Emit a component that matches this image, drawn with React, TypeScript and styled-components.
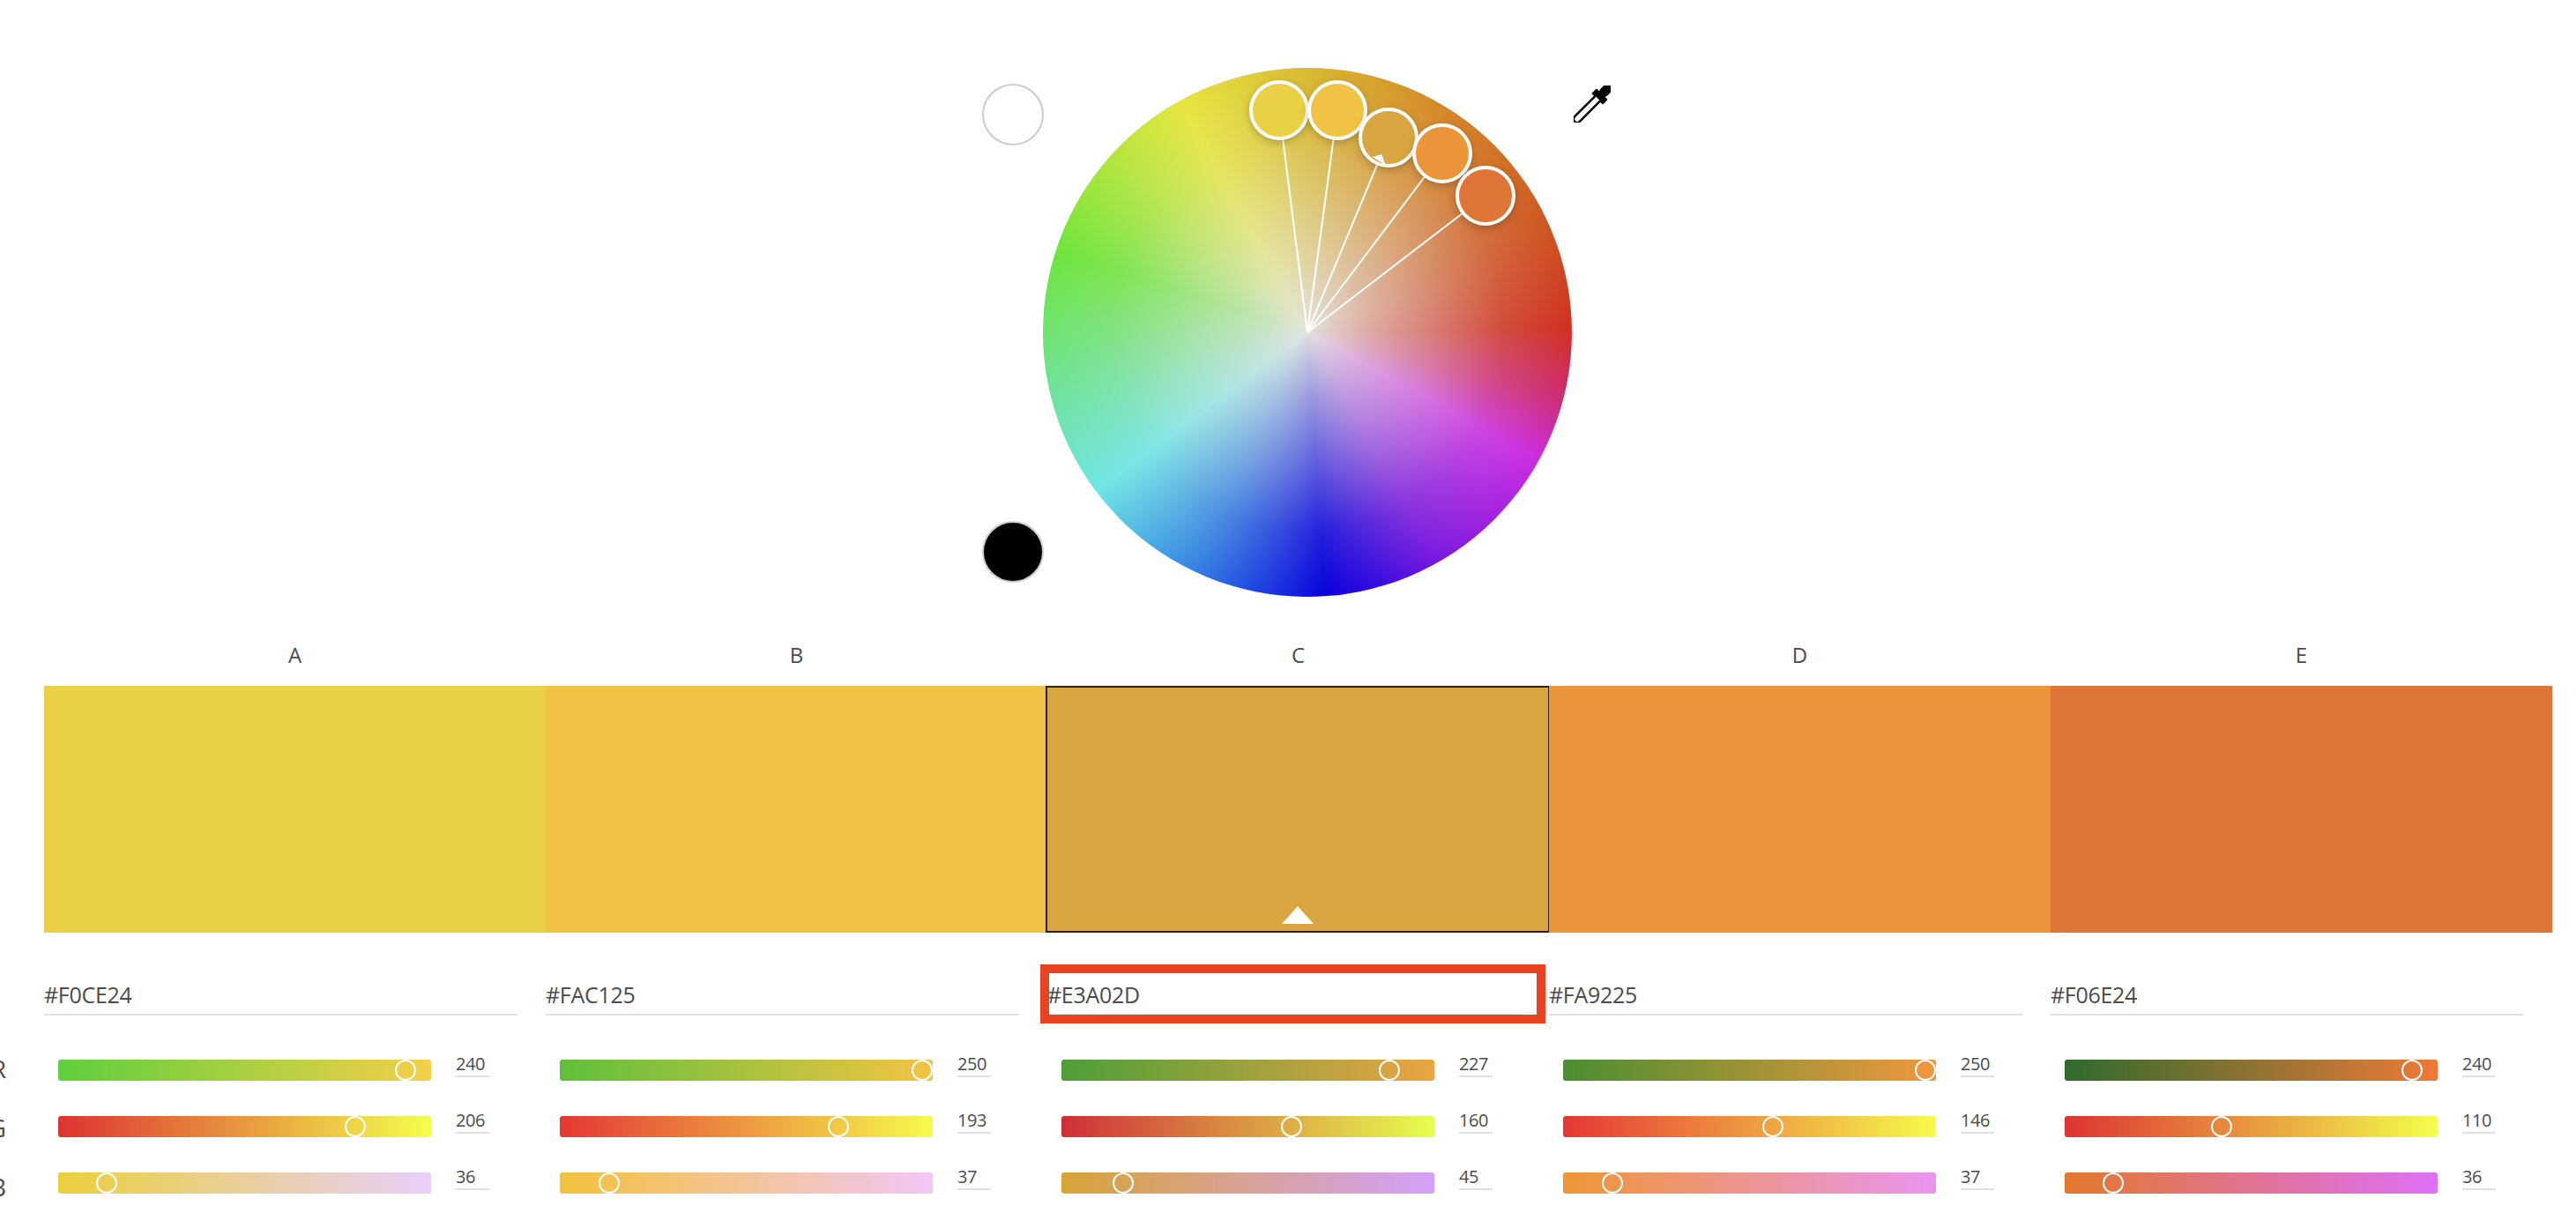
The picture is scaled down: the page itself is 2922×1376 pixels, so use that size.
import styled, { createGlobalStyle } from 'styled-components';

const GlobalStyle = createGlobalStyle`
  html, body {
    margin: 0;
    padding: 0;
    background: #ffffff;
    overflow: hidden;
  }
  body {
    font-family: "Open Sans", "Liberation Sans", sans-serif;
    color: #4b4b4b;
  }
`;

type Channel = { name: string; value: number; from: string; to: string };
type Column = { key: string; hex: string; color: string; channels: Channel[] };

const columns: Column[] = [
  {
    key: 'A',
    hex: '#F0CE24',
    color: '#e9d045',
    channels: [
      { name: 'R', value: 240, from: '#5fcf3c', to: '#f5cf49' },
      { name: 'G', value: 206, from: '#dd3331', to: '#f3ff4d' },
      { name: 'B', value: 36, from: '#ebcf3c', to: '#e8cffc' },
    ],
  },
  {
    key: 'B',
    hex: '#FAC125',
    color: '#f1c344',
    channels: [
      { name: 'R', value: 250, from: '#5fc03a', to: '#f3c443' },
      { name: 'G', value: 193, from: '#e43733', to: '#f6fb4d' },
      { name: 'B', value: 37, from: '#f2c23b', to: '#f3c6f7' },
    ],
  },
  {
    key: 'C',
    hex: '#E3A02D',
    color: '#d8a540',
    channels: [
      { name: 'R', value: 227, from: '#4d9f38', to: '#eba443' },
      { name: 'G', value: 160, from: '#cf2f38', to: '#e6ff4f' },
      { name: 'B', value: 45, from: '#d8a434', to: '#d4a0fb' },
    ],
  },
  {
    key: 'D',
    hex: '#FA9225',
    color: '#eb953a',
    channels: [
      { name: 'R', value: 250, from: '#4a8f30', to: '#f0973d' },
      { name: 'G', value: 146, from: '#e63733', to: '#f6fb4d' },
      { name: 'B', value: 37, from: '#ee9633', to: '#ea94f0' },
    ],
  },
  {
    key: 'E',
    hex: '#F06E24',
    color: '#de7536',
    channels: [
      { name: 'R', value: 240, from: '#2f6b2d', to: '#ee7a38' },
      { name: 'G', value: 110, from: '#dd3331', to: '#f3ff4d' },
      { name: 'B', value: 36, from: '#e3772c', to: '#dd70f8' },
    ],
  },
];

// handle centres inside the 600px wheel canvas
const handles = [
  { x: 268, y: 48, color: '#e9d045' },
  { x: 334, y: 48, color: '#f1c344' },
  { x: 392, y: 79, color: '#d8a540' },
  { x: 453, y: 97, color: '#eb953a' },
  { x: 502, y: 145, color: '#de7536' },
];

const Page = styled.div`
  width: 2922px;
  height: 1376px;
  padding-top: 77px;
  box-sizing: border-box;
  overflow: hidden;
`;

const Wheel = styled.div`
  position: relative;
  width: 600px;
  height: 600px;
  margin-left: 1183px;
`;

const WheelDisc = styled.div`
  width: 600px;
  height: 600px;
  border-radius: 50%;
  background:
    radial-gradient(circle closest-side, rgba(228, 228, 226, 0.98) 0%, rgba(228, 228, 226, 0.84) 10%, rgba(228, 228, 226, 0.66) 25%, rgba(228, 228, 226, 0.4) 50%, rgba(228, 228, 226, 0.14) 75%, rgba(228, 228, 226, 0) 100%),
    conic-gradient(
      #d9b92f 0deg,
      #d58a28 30deg,
      #cf5c22 62deg,
      #d03020 89deg,
      #cf2b78 105deg,
      #cb2be2 119deg,
      #7a18de 150deg,
      #0600dc 176deg,
      #3480e2 205deg,
      #6ee6e6 233deg,
      #6fe28a 262deg,
      #6ee53a 288deg,
      #b4e63c 312deg,
      #e6e63e 331deg,
      #e0cf38 346deg,
      #d9b92f 360deg
    );
`;

const Overlay = styled.svg`
  position: absolute;
  left: 0;
  top: 0;
  pointer-events: none;
`;

const Handle = styled.div<{ $color: string }>`
  position: absolute;
  width: 68px;
  height: 68px;
  margin: -34px 0 0 -34px;
  box-sizing: border-box;
  border: 4px solid #ffffff;
  border-radius: 50%;
  background: ${p => p.$color};
  box-shadow: 0 3px 10px rgba(0, 0, 0, 0.22);
`;

const Tone = styled.div<{ $dark?: boolean }>`
  position: absolute;
  left: -69px;
  top: ${p => (p.$dark ? '514px' : '18px')};
  width: 70px;
  height: 70px;
  box-sizing: border-box;
  border: 2px solid #cccccc;
  border-radius: 50%;
  background: ${p => (p.$dark ? '#000000' : '#ffffff')};
`;

const Dropper = styled.svg`
  position: absolute;
  left: 602px;
  top: 20px;
`;

const Palette = styled.div`
  display: grid;
  grid-template-columns: repeat(5, 569px);
  margin: 55px 0 0 50px;
`;

const ColumnBox = styled.div`
  display: flex;
  flex-direction: column;
`;

const Letter = styled.div`
  height: 46px;
  text-align: center;
  font-size: 24px;
  line-height: 21px;
`;

const Swatch = styled.div<{ $color: string; $selected?: boolean }>`
  position: relative;
  height: 280px;
  background: ${p => p.$color};
  ${p =>
    p.$selected &&
    `
    &::after {
      content: '';
      position: absolute;
      inset: 0 -1px 0 -2px;
      border: 2px solid #2b2210;
    }
  `}
`;

const Caret = styled.div`
  position: absolute;
  left: 266px;
  bottom: 10px;
  width: 0;
  height: 0;
  border-left: 18px solid transparent;
  border-right: 18px solid transparent;
  border-bottom: 20px solid #ffffff;
`;

const HexField = styled.div`
  position: relative;
  width: 537px;
  height: 32px;
  margin-top: 60px;
  border-bottom: 2px solid #e1e1e1;
  font-size: 25px;
  line-height: 20px;
  letter-spacing: -0.3px;
`;

const Highlight = styled.div`
  position: absolute;
  left: -8px;
  right: -28px;
  top: -24px;
  bottom: -11px;
  border: 10px solid #ea4321;
  pointer-events: none;
`;

const Sliders = styled.div`
  display: flex;
  flex-direction: column;
  gap: 40px;
  margin-top: 50px;
`;

const SliderRow = styled.div`
  display: grid;
  grid-template-columns: 16px 423px 38px;
  height: 24px;
`;

// the row labels sit past the page's left edge, only their right part shows
const ChannelName = styled.div<{ $row: number }>`
  display: flex;
  justify-content: flex-end;
  width: 16px;
  margin-left: -59px;
  margin-top: ${p => p.$row * 3 - 1}px;
  font-size: 27px;
  line-height: 24px;
  white-space: nowrap;
`;

const Track = styled.div<{ $from: string; $to: string }>`
  position: relative;
  height: 24px;
  border-radius: 3px;
  background: linear-gradient(90deg, ${p => p.$from}, ${p => p.$to});
`;

const Thumb = styled.div`
  position: absolute;
  top: 0;
  width: 24px;
  height: 24px;
  margin-left: -12px;
  box-sizing: border-box;
  border: 2px solid #ffffff;
  border-radius: 50%;
`;

const ChannelValue = styled.div`
  width: 38px;
  height: 20px;
  margin: -2px 0 0 28px;
  border-bottom: 2px solid #e1e1e1;
  font-size: 20px;
  line-height: 14px;
  letter-spacing: -0.4px;
`;

export default function App() {
  return (
    <Page>
      <GlobalStyle />
      <Wheel>
        <WheelDisc />
        <Overlay width="600" height="600" viewBox="0 0 600 600">
          {handles.map(h => (
            <line key={h.x} x1="300" y1="300" x2={h.x} y2={h.y} stroke="#ffffff" strokeWidth="2" />
          ))}
        </Overlay>
        {handles.map(h => (
          <Handle key={h.x} $color={h.color} style={{ left: h.x, top: h.y }} />
        ))}
        <Overlay width="600" height="600" viewBox="0 0 600 600">
          <polygon points="373.5,101 384.5,98 388.5,110" fill="#ffffff" />
        </Overlay>
        <Tone />
        <Tone $dark />
        <Dropper width="42" height="42" viewBox="0 0 42 42">
          <g transform="rotate(45 21 21)">
            <rect x="15.5" y="-9" width="11" height="16" rx="5" fill="#000000" />
            <rect x="12" y="5" width="18" height="8" rx="1" fill="#000000" />
            <path d="M17 12 V45 a4 4 0 0 0 8 0 V12" fill="#ffffff" stroke="#000000" strokeWidth="2.5" />
          </g>
        </Dropper>
      </Wheel>
      <Palette>
        {columns.map((col, i) => (
          <ColumnBox key={col.key}>
            <Letter>{col.key}</Letter>
            <Swatch $color={col.color} $selected={col.key === 'C'}>
              {col.key === 'C' && <Caret />}
            </Swatch>
            <HexField>
              {col.hex}
              {col.key === 'C' && <Highlight />}
            </HexField>
            <Sliders>
              {col.channels.map((ch, row) => (
                <SliderRow key={ch.name}>
                  <ChannelName $row={row}>{i === 0 ? ch.name : ''}</ChannelName>
                  <Track $from={ch.from} $to={ch.to}>
                    <Thumb style={{ left: ch.value * 1.662 - 5 }} />
                  </Track>
                  <ChannelValue>{ch.value}</ChannelValue>
                </SliderRow>
              ))}
            </Sliders>
          </ColumnBox>
        ))}
      </Palette>
    </Page>
  );
}
